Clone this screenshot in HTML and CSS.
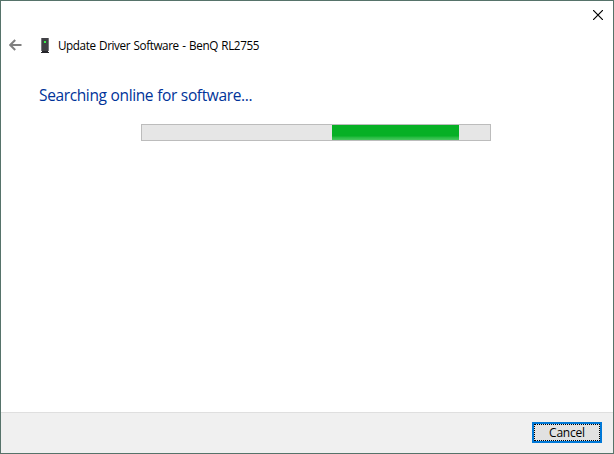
FILE: index.html
```html
<!DOCTYPE html>
<html lang="en">
<head>
<meta charset="utf-8">
<title>Update Driver Software</title>
<link rel="stylesheet" href="styles.css">
</head>
<body>
<div class="window">
  <div class="titlebar">
    <svg class="close" width="10" height="10" viewBox="0 0 10 10"><path d="M0 0L10 10M10 0L0 10"/></svg>
  </div>
  <header class="header">
    <svg class="back" width="13" height="12" viewBox="0 0 13 12"><path d="M6.2 1L1.2 6l5 5M1.5 6H12.5"/></svg>
    <svg class="device" width="8" height="15" viewBox="0 0 8 15" shape-rendering="crispEdges">
      <path fill="#77777b" d="M0 0h8v13H0z"/><path fill="#414145" d="M1 0h6v13H1z"/>
      <path fill="#38f04a" d="M3 3h2v2H3z"/><path fill="#242429" d="M1 13h6v1H1zM0 14h8v1H0z"/>
    </svg>
    <span class="title">Update Driver Software - BenQ RL2755</span>
  </header>
  <main class="content">
    <h1 class="heading">Searching online for software...</h1>
    <div class="progress"><div class="chunk"></div></div>
  </main>
  <footer class="footer"><button class="cancel"><span class="label">Cancel</span></button></footer>
</div>
</body>
</html>
```
FILE: styles.css
```css
* { box-sizing: border-box; }
body { margin: 0; font-family: "Open Sans", "Noto Sans", sans-serif; }
.window {
  width: 614px; height: 454px;
  display: flex; flex-direction: column;
  border: 1px solid #56736a;
  background: #fff;
}
.titlebar { height: 29px; display: flex; justify-content: flex-end; padding: 9px 10px 0 0; }
.close { fill: none; stroke: #000; stroke-width: 1.2; }
.header { height: 32px; display: flex; align-items: flex-start; padding: 8px 0 0 8px; }
.back { flex: none; margin-top: 1px; fill: none; stroke: #808080; stroke-width: 2; }
.device { flex: none; margin-left: 19px; }
.title { margin: -2px 0 0 9px; font-size: 11.7px; line-height: 18px; letter-spacing: -0.41px; word-spacing: 0.9px; color: #000; white-space: nowrap; }
.content { flex: 1; padding: 22px 0 0 38px; }
.heading { margin: 0; font-size: 15.5px; line-height: 23px; font-weight: 400; letter-spacing: -0.37px; word-spacing: 0.3px; color: #003399; white-space: nowrap; }
.progress {
  width: 350px; height: 17px; margin: 17px 0 0 102px; padding-left: 190px;
  border: 1px solid #bcbcbc;
  background: #e6e6e6;
}
.chunk { width: 127px; height: 15px; background: linear-gradient(#06b025 0 11px, #22ba3e 12px, #48c75e 15px); }
.footer {
  height: 41px; display: flex; justify-content: flex-end; padding: 9px 11px 0 0;
  border-top: 1px solid #dfdfdf;
  background: #f0f0f0;
}
.cancel {
  width: 70px; height: 21px; padding: 0;
  border: 2px solid #0078d7;
  background: #e1e1e1;
  font: 12px/15px "Open Sans", "Noto Sans", sans-serif;
  color: #000;
}
.label { display: block; height: 17px; border: 1px dotted #000; letter-spacing: -0.2px; }
```
